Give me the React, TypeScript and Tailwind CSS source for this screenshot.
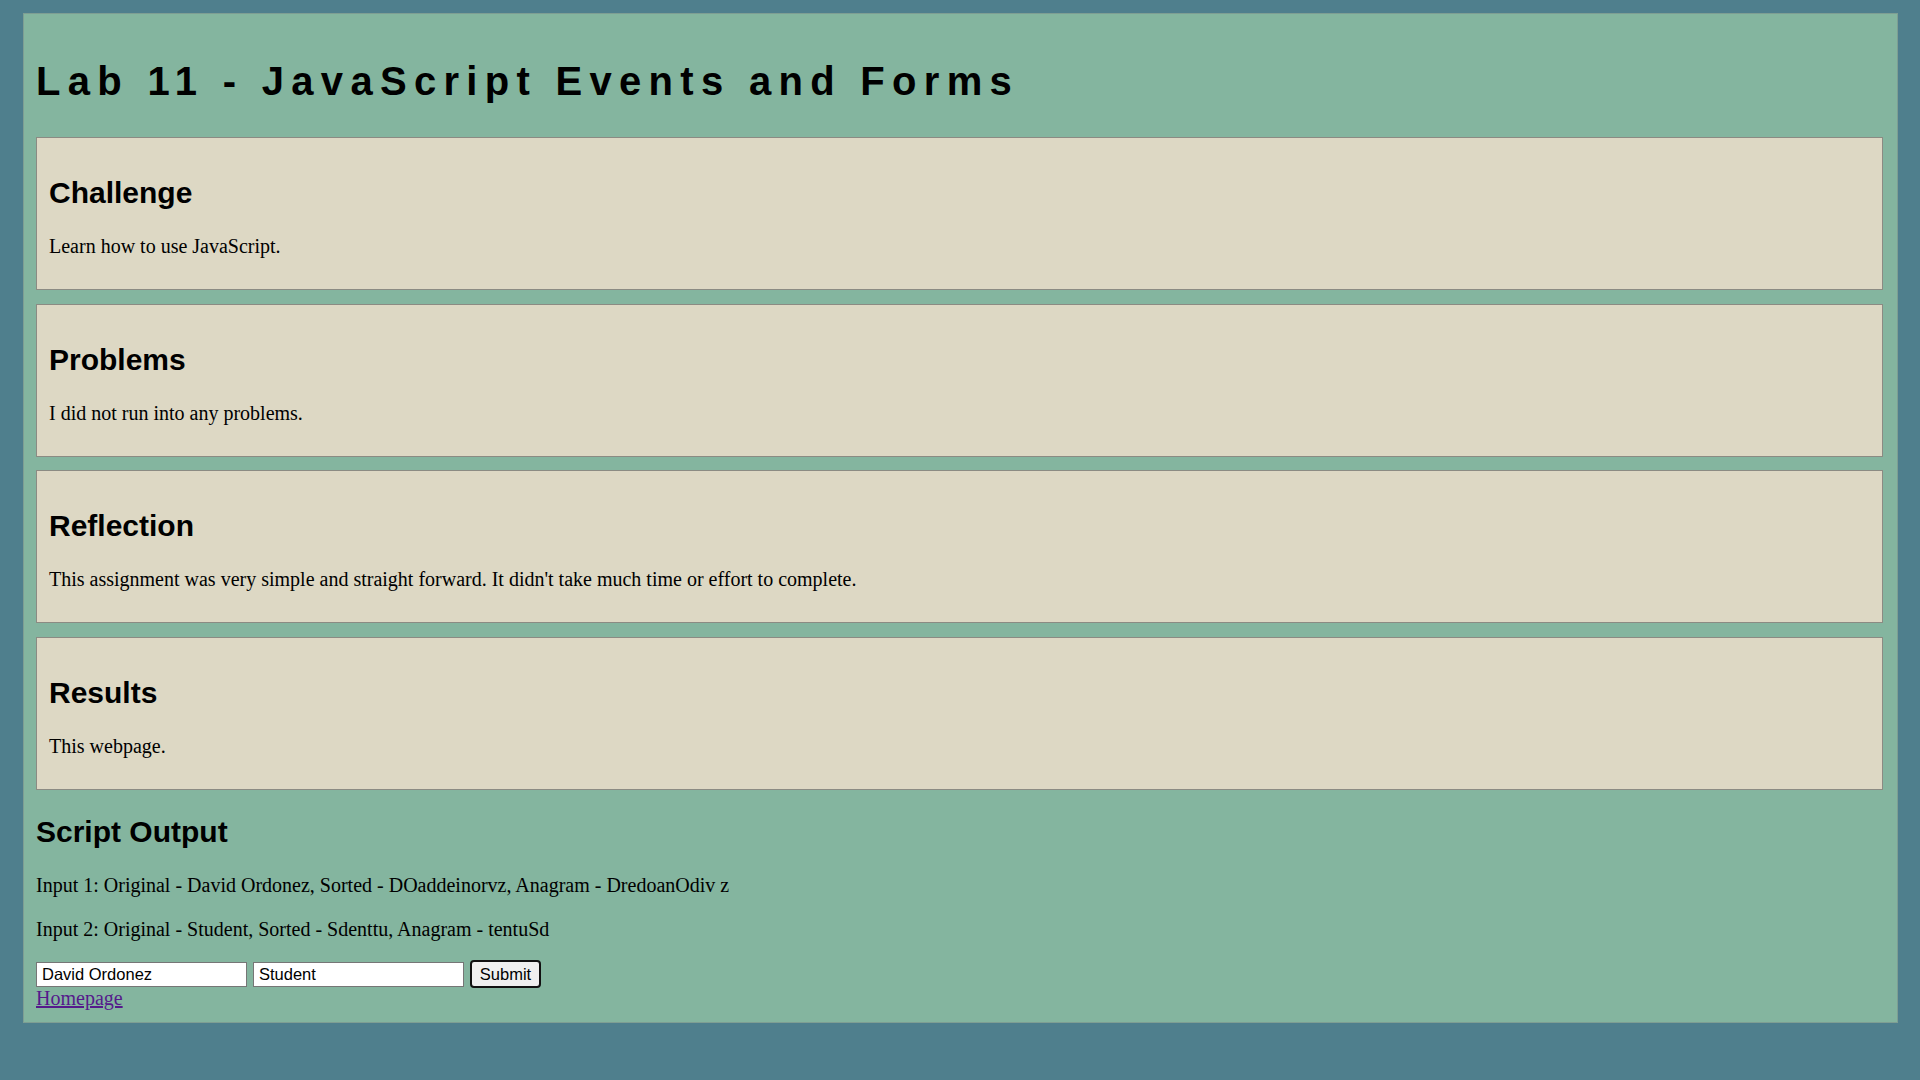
const sections = [
  { title: 'Challenge', body: 'Learn how to use JavaScript.' },
  { title: 'Problems', body: 'I did not run into any problems.' },
  {
    title: 'Reflection',
    body: "This assignment was very simple and straight forward. It didn't take much time or effort to complete.",
  },
  { title: 'Results', body: 'This webpage.' },
]

const sans = 'font-["Liberation_Sans",Arial,sans-serif]'

export default function App() {
  return (
    <div className="min-h-screen bg-[#4f7f8d] pt-[13px] pb-[58px] font-['Liberation_Serif','Times_New_Roman',serif] text-black">
      <div className="ml-[23px] mr-[22px] border border-[#7e9e93] bg-[#84b59f] pl-[12px] pr-[14px] pt-[12px] pb-[12px]">
        <h1
          className={`${sans} mt-[32px] mb-[33px] text-[40px] font-bold leading-[46px] tracking-[7.3px]`}
        >
          Lab 11 - JavaScript Events and Forms
        </h1>

        {sections.map((s) => (
          <div key={s.title} className="mb-[13.5px] border border-[#8b8b83] bg-[#ddd8c4] px-[12px] py-[12px]">
            <h2 className={`${sans} mt-[26px] mb-[25px] text-[30px] font-bold leading-[34px]`}>{s.title}</h2>
            <p className="mb-[19px] text-[20px] leading-[23px]">{s.body}</p>
          </div>
        ))}

        <h2 className={`${sans} mt-[25px] mb-[25px] text-[30px] font-bold leading-[34px]`}>Script Output</h2>
        <p className="mb-[21px] text-[20px] leading-[23px]">
          Input 1: Original - David Ordonez, Sorted - DOaddeinorvz, Anagram - DredoanOdiv z
        </p>
        <p className="mb-[20.5px] text-[20px] leading-[23px]">
          Input 2: Original - Student, Sorted - Sdenttu, Anagram - tentuSd
        </p>

        {/* form row */}
        <div className="flex h-[26px] items-center gap-[6px]">
          <input
            defaultValue="David Ordonez"
            className={`${sans} h-[25px] w-[211px] border border-[#767676] bg-white pl-[5px] text-[16.5px] text-black outline-none`}
          />
          <input
            defaultValue="Student"
            className={`${sans} h-[25px] w-[211px] border border-[#767676] bg-white pl-[5px] text-[16.5px] text-black outline-none`}
          />
          <button
            className={`${sans} h-[28px] w-[71px] rounded-[4px] border-2 border-[#111] bg-[#efefef] text-[16.5px] leading-none text-black`}
          >
            Submit
          </button>
        </div>
        <a href="#" className="block w-fit text-[20px] leading-[23px] text-[#551a8b] underline">
          Homepage
        </a>
      </div>
    </div>
  )
}
